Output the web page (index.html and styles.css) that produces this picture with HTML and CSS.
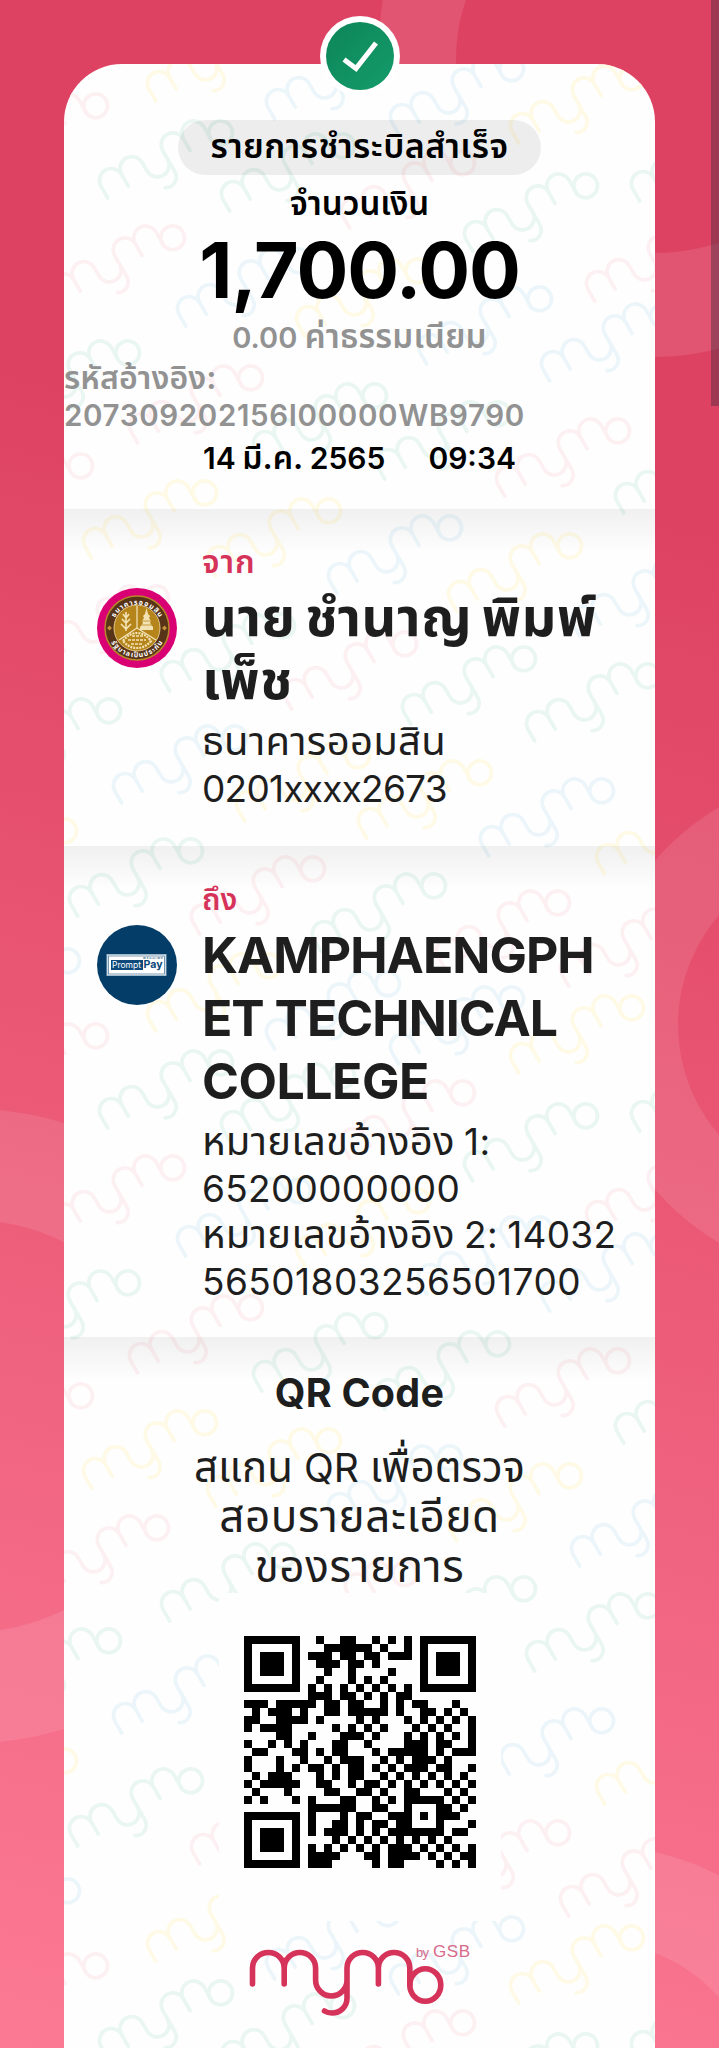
FILE: index.html
```html
<!DOCTYPE html>
<html lang="th">
<head>
<meta charset="utf-8">
<title>MyMo</title>
<link rel="stylesheet" href="styles.css">
</head>
<body>
<div class="screen">
  <svg class="backdrop" viewBox="0 0 719 2048" aria-hidden="true">
    <g fill="#fff" fill-opacity=".1" fill-rule="evenodd">
      <path d="M379 50a276 307 0 1 0 552 0a276 307 0 1 0-552 0zM456 60a199 193 0 1 0 398 0a199 193 0 1 0-398 0z"/>
      <path d="M594 1025a252 252 0 1 0 504 0a252 252 0 1 0-504 0zM678 1025a168 168 0 1 0 336 0a168 168 0 1 0-336 0z"/>
      <path d="M-346 1426a317 317 0 1 0 634 0a317 317 0 1 0-634 0zM-235 1426a206 206 0 1 0 412 0a206 206 0 1 0-412 0z"/>
      <path d="M346 2100a254 254 0 1 0 508 0a254 254 0 1 0-508 0zM443 2100a157 157 0 1 0 314 0a157 157 0 1 0-314 0z"/>
    </g>
  </svg>
  <main class="card">
    <svg class="watermark" id="watermark" viewBox="64 64 591 1984" aria-hidden="true">
      <defs>
        <g id="mark" fill="none" stroke-width="4.500" stroke-linecap="round">
          <path d="M0 31V15a14.500 15 0 0 1 29 0V31M29 15a14.500 15 0 0 1 29 0V26a14.500 15 0 0 0 29 0V15a14.500 15 0 0 1 29 0V31M116 15a14.500 15 0 0 1 29 0V31M87 26V43a13 14 0 0 1-20 12"/>
          <circle cx="159" cy="31" r="14.500"/>
        </g>
      </defs>
    </svg>
    <section class="summary">
      <h1 class="status">รายการชำระบิลสำเร็จ</h1>
      <p class="label">จำนวนเงิน</p>
      <p class="amount">1,700.00</p>
      <p class="fee">0.00 <span class="th">ค่าธรรมเนียม</span></p>
      <p class="ref"><span class="th">รหัสอ้างอิง:</span><br>207309202156I00000WB9790</p>
      <p class="date"><span>14 <span class="th">มี.ค.</span> 2565</span><span>09:34</span></p>
    </section>
    <section class="party from">
      <svg class="logo" viewBox="0 0 80 80">
        <circle cx="40" cy="40" r="40" fill="#d90073"/>
        <circle cx="40" cy="40" r="32" fill="#573318" stroke="#b8862a" stroke-width="1.500"/>
        <circle cx="40" cy="40" r="23" fill="#b5851c" stroke="#e5c98a"/>
        <path d="M40 18V40L22 52M40 40L59 52" fill="none" stroke="#f5e6bd" stroke-width="1.200"/>
        <path d="M49.500 20l1.500 6 2 2-1 2 2 3-1 2 3 4v3H43v-3l3-4-1-2 2-3-1-2 2-2z" fill="#f3e3b4"/>
        <path d="M43 37h13M45 33h9" stroke="#b5851c" stroke-width=".8"/>
        <path d="M29 24v19M26 26l3 4 3-4M25 31l4 4 4-4M24 36l5 5 5-5" fill="none" stroke="#f3e3b4" stroke-width="1.600"/>
        <path d="M26 53q6-8 14-8t14 8q-6 7-14 7t-14-7z" fill="none" stroke="#f3e3b4" stroke-width="2.200" stroke-dasharray="2 1"/>
        <path d="M31 52h18M34 56h12M35 48h11" stroke="#f3e3b4" stroke-width="1.600" stroke-dasharray="3 1"/>
        <path d="M10 40l2.500-2.500 2.500 2.500-2.500 2.500zM65 40l2.500-2.500 2.500 2.500-2.500 2.500z" fill="#c4923a"/>
        <path id="arcTop" d="M15.500 35A25.500 25.500 0 0 1 64.500 35" fill="none"/>
        <path id="arcBottom" d="M11 47A30 30 0 0 0 69 47" fill="none"/>
        <text class="seal-text"><textPath href="#arcTop" startOffset="50%" text-anchor="middle" textLength="54">ธนาคารออมสิน</textPath></text>
        <text class="seal-text"><textPath href="#arcBottom" startOffset="50%" text-anchor="middle" textLength="62">รัฐบาลเป็นประกัน</textPath></text>
      </svg>
      <div class="info">
        <p class="caption">จาก</p>
        <h2 class="name"><span class="th">นาย ชำนาญ พิมพ์<br>เพ็ช</span></h2>
        <p class="detail"><span class="th">ธนาคารออมสิน</span><br><span class="account">0201xxxx2673</span></p>
      </div>
    </section>
    <section class="party to">
      <svg class="logo" viewBox="0 0 80 80">
        <circle cx="40" cy="40" r="40" fill="#043e68"/>
        <rect x="10" y="29.500" width="59" height="21" fill="#fff" stroke="#9fb9cd"/>
        <rect x="11.500" y="31" width="56" height="18" fill="none" stroke="#3f6d92" stroke-width=".7"/>
        <rect x="14" y="35" width="32" height="10" fill="#0d4a7b"/>
        <text class="pp-small" x="46" y="33.600" textLength="20">พร้อมเพย์</text>
        <text class="pp-prompt" x="15" y="43" textLength="29" lengthAdjust="spacingAndGlyphs">Prompt</text>
        <text class="pp-pay" x="46.500" y="43" textLength="19" lengthAdjust="spacingAndGlyphs">Pay</text>
      </svg>
      <div class="info">
        <p class="caption">ถึง</p>
        <h2 class="name">KAMPHAENGPH<br>ET TECHNICAL<br><span class="tail">COLLEGE</span></h2>
        <p class="detail"><span class="th">หมายเลขอ้างอิง</span> 1:<br>65200000000<br><span class="th">หมายเลขอ้างอิง</span> 2: 14032<br><span class="long">56501803256501700</span></p>
      </div>
    </section>
    <section class="verify">
      <h2 class="qr-title">QR Code</h2>
      <p class="qr-hint"><span class="th">สแกน</span> QR <span class="th">เพื่อตรวจ</span><br><span class="th wide">สอบรายละเอียด<br>ของรายการ</span></p>
      <div class="qr-box"><svg class="qr" id="qr" viewBox="0 0 29 29" shape-rendering="crispEdges"></svg></div>
      <svg class="brand" viewBox="245 1940 230 80">
        <g fill="none" stroke="#d6335a" stroke-width="5.600" stroke-linecap="round">
          <path d="M252.500 1984V1968a15.800 15.500 0 0 1 31.700 0V1984M284.200 1968a15.700 15.500 0 0 1 31.400 0V1980a15.700 16 0 0 0 31.400 0V1968a15.700 15.500 0 0 1 31.400 0V1984M378.400 1968a15.700 15.500 0 0 1 31.400 0V1985M347 1979V1998c0 9-7 15-15 15q-4.500 0-7.500-2"/>
          <ellipse cx="425.300" cy="1985" rx="15.500" ry="16.300"/>
        </g>
        <text class="brand-by" x="416" y="1957" textLength="13">by</text>
        <text class="brand-gsb" x="433" y="1957" textLength="37">GSB</text>
      </svg>
    </section>
  </main>
  <svg class="badge" viewBox="0 0 80 80">
    <defs><linearGradient id="g" x1="0" y1="0" x2="1" y2="1"><stop offset="0" stop-color="#0c8558"/><stop offset="1" stop-color="#159c6b"/></linearGradient></defs>
    <circle cx="40" cy="40" r="40" fill="#fff"/>
    <circle cx="40" cy="40" r="34" fill="url(#g)"/>
    <path d="M24 43.500L36 52.500L56 27" fill="none" stroke="#fff" stroke-width="5"/>
  </svg>
  <div class="scrollbar"></div>
</div>
<script src="app.js"></script>
</body>
</html>
```
FILE: styles.css
```css
* { box-sizing: border-box; }
body { margin: 0; font-family: Inter, "Noto Sans Thai", "Noto Sans", sans-serif; color: #1e1e1e; }
h1, h2, p { margin: 0; font-weight: inherit; }
.screen {
  position: relative; width: 719px; height: 2048px; overflow: hidden; padding: 64px 64px 0;
  background: linear-gradient(193deg, #de4262 0%, #de4262 24%, #e95673 52%, #f16582 72%, #fc7a94 100%);
}
.backdrop { position: absolute; inset: 0; width: 719px; height: 2048px; }
.card { position: relative; width: 591px; height: 1984px; background: #fefefe; border-radius: 58px 58px 0 0; overflow: hidden; }
.watermark { position: absolute; inset: 0; width: 591px; height: 1984px; }
.card section { position: relative; }
.th { line-height: 0; }
.summary { height: 445px; padding-top: 56px; display: flex; flex-direction: column; align-items: center; color: #000; font-weight: 600; white-space: nowrap; }
.status { width: 363px; height: 55px; border-radius: 28px; background: rgba(0,0,0,.065); font-size: 34px; line-height: 51px; letter-spacing: .5px; text-align: center; }
.label { margin-top: 11px; font-size: 33px; line-height: 34px; }
.amount { margin-top: 10px; font-size: 77px; line-height: 80px; font-weight: 700; letter-spacing: -1.100px; }
.fee { margin-top: 9px; font-size: 29px; line-height: 38px; color: #929292; }
.fee .th { font-size: 33px; letter-spacing: .2px; }
.ref { align-self: stretch; margin-top: 3px; font-size: 29.500px; line-height: 37px; letter-spacing: .65px; color: #929292; }
.ref .th { font-size: 32px; letter-spacing: .1px; }
.date { margin-top: 4px; display: flex; gap: 43px; font-size: 30px; line-height: 40px; word-spacing: -1px; }
.date .th { font-size: 32px; }
.party { display: flex; gap: 27px; padding: 36px 0 0 33px; background: linear-gradient(rgba(0,0,0,.055), rgba(0,0,0,.035) 16px, transparent 44px) no-repeat; }
.from { height: 337px; }
.to { height: 491px; }
.logo { flex: none; width: 80px; height: 80px; margin-top: 43px; }
.info { flex: 1; margin-left: -2px; white-space: nowrap; }
.caption { font-size: 30px; line-height: 34px; font-weight: 600; color: #d6335a; }
.from .caption { font-size: 32px; letter-spacing: .9px; }
.name { margin-top: 8px; font-size: 50px; line-height: 63px; font-weight: 700; letter-spacing: -1px; }
.name .th { font-size: 54px; letter-spacing: .6px; word-spacing: -4px; }
.name .tail { letter-spacing: -.5px; }
.detail { margin-top: 6px; font-size: 37px; line-height: 46.700px; letter-spacing: .3px; word-spacing: -1.500px; }
.detail .th { font-size: 40px; letter-spacing: .3px; }
.detail .account { letter-spacing: -.75px; }
.detail .long { letter-spacing: .45px; }
.verify { height: 711px; padding-top: 32px; display: flex; flex-direction: column; align-items: center; text-align: center; white-space: nowrap; background: linear-gradient(rgba(0,0,0,.055), rgba(0,0,0,.035) 16px, transparent 44px) no-repeat; }
.qr-title { font-size: 39.500px; line-height: 48px; font-weight: 700; letter-spacing: .2px; }
.qr-hint { height: 150px; margin-top: 26px; font-size: 39px; line-height: 50px; }
.qr-hint .th { font-size: 42px; }
.qr-hint .wide { font-size: 44px; letter-spacing: .6px; }
.qr-box { width: 282px; height: 328px; padding-top: 43px; background: #fefefe; }
.qr { display: block; width: 232px; height: 232px; margin: 0 auto; }
.brand { width: 230px; height: 80px; margin-top: 19px; }
.badge { position: absolute; left: 319.500px; top: 16px; width: 80px; height: 80px; }
.scrollbar { position: absolute; right: 0; top: 0; width: 8px; height: 406px; background: rgba(70,40,60,.42); }
.seal-text { font-size: 7px; font-weight: 700; fill: #fff; }
.pp-small { font-size: 4px; fill: #0d4a7b; }
.pp-prompt { font-size: 9px; fill: #fff; }
.pp-pay { font-size: 11px; font-weight: 700; fill: #0d4a7b; }
.brand-by { font-family: "Liberation Sans", sans-serif; font-size: 13px; fill: #d6698a; }
.brand-gsb { font-family: "Liberation Sans", sans-serif; font-size: 17px; fill: #d6698a; }
```
FILE: app.js
```js
const NS = 'http://www.w3.org/2000/svg';

// QR modules, one string for each row
const rows = [
  '11111110010011001010101111111',
  '10000010001111110100101000001',
  '10111010111011011011101011101',
  '10111010011101101000001011101',
  '10111010001001000010001011101',
  '10000010010001010100001000001',
  '11111110101010101010101111111',
  '00000000111011010101100000000',
  '11101111101101100101011000100',
  '01011101001101111101001101010',
  '11001111010000101000101010101',
  '10111100000101010100010101001',
  '00001100100011101000101010101',
  '10010101000110010000111011001',
  '01100011010110001011111010111',
  '10001001001011100101011101000',
  '10001010110101101010111011001',
  '01011100010101100101010101010',
  '10111110011001011010101010101',
  '01000100001100110100110001010',
  '10100010100011001010111110101',
  '00000000111111001100100011010',
  '11111110100010110011101011100',
  '10000010100110101101100010001',
  '10111010101110101011111110110',
  '10111010000101010101010101000',
  '10111010101010101011101010101',
  '10000010111100011011110101011',
  '11111110111000001011000010101'
];
let d = '';
rows.forEach((row, y) => [...row].forEach((v, x) => { if (v === '1') d += `M${x} ${y}h1v1h-1z`; }));
const modules = document.createElementNS(NS, 'path');
modules.setAttribute('d', d);
document.getElementById('qr').append(modules);

// Watermark marks: left and top of each one, and its colour
const G = '#e9f6f1', R = '#fdf0f2', B = '#ecf6fa', Y = '#fefae6';
const marks = [
  [103,117,G],[225,130,G],[345,147,R],[468,170,G],[55,222,R],[394,53,B],[514,62,Y],[270,38,B],[-22,90,R],
  [151,20,Y],[635,120,G],[590,220,R],[181,245,B],[300,255,Y],[422,283,B],[545,300,B],[10,337,G],[133,362,R],
  [257,380,G],[380,398,G],[500,415,R],[619,432,G],[-37,450,R],[87,477,Y],[211,495,Y],[332,512,B],[452,530,Y],
  [575,555,B],[39,582,R],[165,610,G],[287,628,R],[406,643,G],[530,660,G],[-9,695,G],[117,722,B],[240,740,Y],
  [362,757,Y],[484,775,B],[600,793,Y],[-53,815,Y],[73,835,G],[195,853,R],[316,870,G],[440,887,R],[564,905,R],[-50,945,B]
];
const watermark = document.getElementById('watermark');
for (const shift of [0, 930, 1860]) {
  for (const [x, y, colour] of marks) {
    const use = document.createElementNS(NS, 'use');
    use.setAttribute('href', '#mark');
    use.setAttribute('stroke', colour);
    use.setAttribute('transform', `translate(${x - 8} ${y + shift + 59}) rotate(-30) scale(.82)`);
    watermark.append(use);
  }
}
```
